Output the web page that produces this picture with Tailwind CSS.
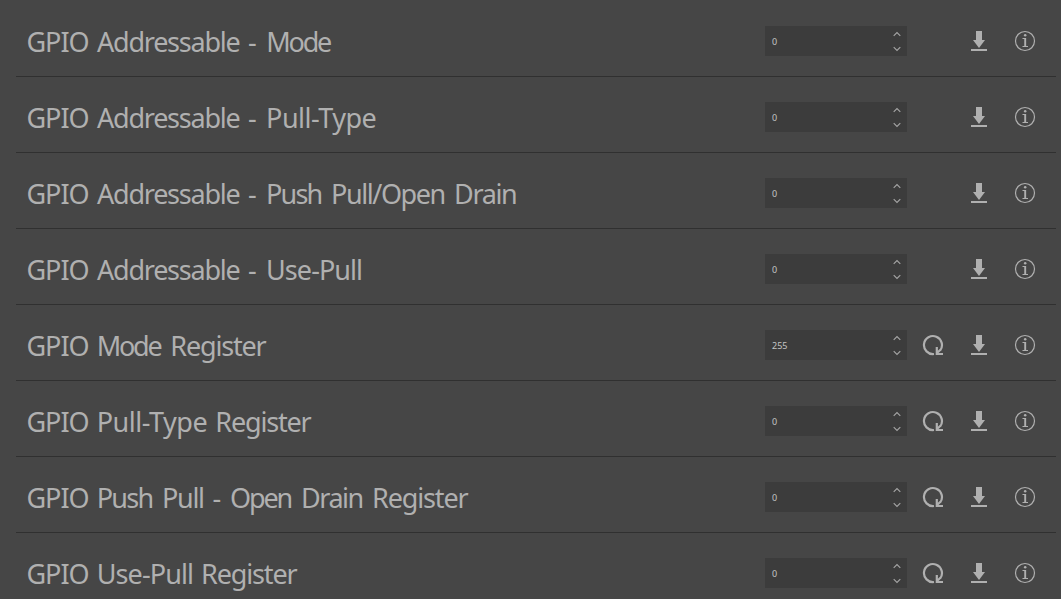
<!DOCTYPE html>
<html lang="en">
<head>
<meta charset="utf-8">
<title>GPIO</title>
<script src="https://cdn.jsdelivr.net/npm/@tailwindcss/browser@4"></script>
</head>
<body class="bg-[#464646] overflow-hidden h-screen">
<main id="rows" class="pt-px pl-4 pr-[5px] text-[#b0b0b0]"></main>
<template id="row">
  <div class="h-[76px] border-b border-[#303030] flex items-center pl-[10px] pr-[20px]">
    <span class="label flex-1 whitespace-nowrap font-['Noto_Sans',sans-serif] text-[27px] leading-[36px] pt-[7px]"></span>
    <div class="w-[142px] h-[30px] mt-[5px] bg-[#3c3c3c] flex items-center justify-between pl-[7px] pr-[6px]">
      <span class="value font-['Noto_Sans',sans-serif] text-[9px] leading-none text-[#c4c4c4]"></span>
      <svg class="w-2 h-[22px]" viewBox="0 0 8 22" fill="none" stroke="#a6a6a6" stroke-width="1.1"><path d="M.7 5.8 4 2.5l3.300 3.300M.7 17.200 4 20.500l3.300-3.300"/></svg>
    </div>
    <div class="flex gap-6 ml-[15px] mt-[5px]">
      <svg class="reset size-[22px]" viewBox="0 0 22 22" fill="none" stroke="#b0b0b0" stroke-width="2.200"><path d="M12 20A9 9 0 1 1 18.200 16.400M14.800 13v7M13.700 20H21M14.500 19.500l4.200-4"/></svg>
      <svg class="size-[22px]" viewBox="0 0 22 22" fill="#b0b0b0"><path d="M8 1h6v9h3l-6 8-6-8h3zM3 19h16v2H3z"/></svg>
      <svg class="size-[22px]" viewBox="0 0 22 22" fill="none" stroke="#b0b0b0"><circle cx="11" cy="11" r="9.500" stroke-width="1.200"/><path d="M8.500 8.500h3M8.500 16.500h5.500" stroke-width="1.100"/><path d="M11.200 8v9" stroke-width="1.900"/><circle cx="11.200" cy="5.200" r="1.250" fill="#b0b0b0" stroke="none"/></svg>
    </div>
  </div>
</template>
<script>
// Each label is a list of words with the left and right edge of its glyphs.
const gpio = ["GPIO", 27.5, 88.5];
const addr = [gpio, ["Addressable", 97, 239.5], ["-", 249, 257]];
const rows = [
  [[...addr, ["Mode", 268.3, 331]], 0, false],
  [[...addr, ["Pull-Type", 268, 375.5]], 0, false],
  [[...addr, ["Push", 268, 321.5], ["Pull/Open", 333, 444.5], ["Drain", 456, 516]], 0, false],
  [[...addr, ["Use-Pull", 268, 361]], 0, false],
  [[gpio, ["Mode", 98.7, 161.5], ["Register", 172.3, 266.5]], 255, true],
  [[gpio, ["Pull-Type", 98.7, 206.5], ["Register", 217.3, 311.5]], 0, true],
  [[gpio, ["Push", 98.7, 152.5], ["Pull", 164, 203], ["-", 213.500, 221], ["Open", 231, 291.5], ["Drain", 303, 362.5], ["Register", 374, 468.5]], 0, true],
  [[gpio, ["Use-Pull", 98.7, 192], ["Register", 203, 297.5]], 0, true]
];
const ctx = document.createElement("canvas").getContext("2d");
ctx.font = '27px "Noto Sans"';
const space = ctx.measureText(" ").width;
for (const [words, value, reset] of rows) {
  const r = document.getElementById("row").content.cloneNode(true);
  const label = r.querySelector(".label");
  let cursor = 26;
  for (const [word, left, right] of words) {
    const m = ctx.measureText(word);
    const ink = m.actualBoundingBoxRight + m.actualBoundingBoxLeft;
    const spacing = word.length > 1 ? (right - left - ink) / (word.length - 1) : 0;
    const start = left + m.actualBoundingBoxLeft;
    const span = document.createElement("span");
    span.textContent = word;
    span.style.letterSpacing = spacing + "px";
    span.style.marginLeft = start - cursor + "px";
    label.append(span, " ");
    cursor = start + m.width + spacing * word.length + space;
  }
  r.querySelector(".value").textContent = value;
  if (!reset) r.querySelector(".reset").classList.add("invisible");
  document.getElementById("rows").append(r);
}
</script>
</body>
</html>
